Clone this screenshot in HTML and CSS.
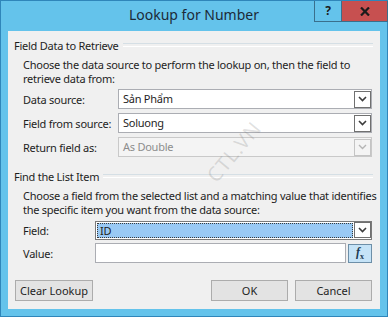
FILE: index.html
```html
<!DOCTYPE html>
<html lang="en">
<head>
    <meta charset="UTF-8">
    <title>Lookup for Number</title>
    <link rel="stylesheet" href="styles.css">
</head>
<body>
    <div class="window">
        <div class="titlebar">
            <div></div>
            <div class="title">Lookup for Number</div>
            <div class="controls">
                <span class="help">?</span>
                <span class="close">
                    <svg width="10" height="9" viewBox="0 0 10 9"><path d="M1 0.5 L9 8.5 M9 0.5 L1 8.5" stroke="#1b1b1b" stroke-width="2.2"/></svg>
                </span>
            </div>
        </div>
        <div class="client">
            <div class="group-head"><span>Field Data to Retrieve</span></div>
            <div class="group-body">
                <p class="desc">Choose the data source to perform the lookup on, then the field to<br>retrieve data from:</p>
                <div class="row wide">
                    <label>Data source:</label>
                    <div class="combo"><span>Sản Phẩm</span><i class="arrow"><svg width="9" height="6" viewBox="0 0 9 6"><path d="M1 1 L4.5 4.5 L8 1" fill="none" stroke="#3c3c3c" stroke-width="1.6"/></svg></i></div>
                </div>
                <div class="row wide">
                    <label>Field from source:</label>
                    <div class="combo"><span>Soluong</span><i class="arrow"><svg width="9" height="6" viewBox="0 0 9 6"><path d="M1 1 L4.5 4.5 L8 1" fill="none" stroke="#3c3c3c" stroke-width="1.6"/></svg></i></div>
                </div>
                <div class="row wide">
                    <label>Return field as:</label>
                    <div class="combo disabled"><span>As Double</span><i class="arrow"><svg width="9" height="6" viewBox="0 0 9 6"><path d="M1 1 L4.5 4.5 L8 1" fill="none" stroke="#b5b5b5" stroke-width="1.4"/></svg></i></div>
                </div>
            </div>

            <div class="group-head second"><span>Find the List Item</span></div>
            <div class="group-body">
                <p class="desc">Choose a field from the selected list and a matching value that identifies<br>the specific item you want from the data source:</p>
                <div class="row narrow">
                    <label>Field:</label>
                    <div class="combo focused"><span class="sel">ID</span><i class="arrow"><svg width="9" height="6" viewBox="0 0 9 6"><path d="M1 1 L4.5 4.5 L8 1" fill="none" stroke="#3c3c3c" stroke-width="1.6"/></svg></i></div>
                </div>
                <div class="row narrow">
                    <label>Value:</label>
                    <div class="value-wrap">
                        <div class="textbox"></div>
                        <button class="fx"><i>f</i><sub>x</sub></button>
                    </div>
                </div>
            </div>

            <div class="buttons">
                <button class="btn clear">Clear Lookup</button>
                <div class="spacer"></div>
                <button class="btn">OK</button>
                <button class="btn">Cancel</button>
            </div>

            <div class="watermark">CTL.VN</div>
        </div>
    </div>
</body>
</html>
```

FILE: styles.css
```css
* {
    margin: 0;
    padding: 0;
    box-sizing: border-box;
}
body {
    width: 388px;
    height: 317px;
    overflow: hidden;
    background: #fff;
    font-family: "Noto Sans", "Open Sans", sans-serif;
    font-size: 11px;
    letter-spacing: -0.25px;
    color: #1e1e1e;
}
.window {
    width: 388px;
    height: 317px;
    background: #64c3eb;
    border: 1px solid #2f86ba;
    padding: 0 7px 7px 7px;
    display: flex;
    flex-direction: column;
}
.titlebar {
    height: 30px;
    display: grid;
    grid-template-columns: 1fr auto 1fr;
}
.title {
    font-size: 14px;
    letter-spacing: 0;
    color: #1c2a38;
    line-height: 28px;
}
.controls {
    justify-self: end;
    align-self: start;
    display: flex;
    margin-right: -8px;
}
.help {
    width: 27px;
    height: 21px;
    border: 1px solid #3a6f8c;
    border-top: none;
    border-right: none;
    text-align: center;
    font-weight: bold;
    font-size: 12px;
    line-height: 20px;
    color: #1b1b1b;
}
.close {
    width: 47px;
    height: 21px;
    background: #c75050;
    border: 1px solid #3a6f8c;
    border-top: none;
    display: flex;
    align-items: center;
    justify-content: center;
}
.client {
    flex: 1;
    background: #f0f0f0;
    padding: 6px 7px 0 6px;
    position: relative;
    overflow: hidden;
}
.group-head {
    display: flex;
    align-items: center;
    height: 16px;
}
.group-head::after {
    content: "";
    flex: 1;
    height: 2px;
    border-top: 1px solid #d5dfe5;
    border-bottom: 1px solid #fff;
    margin-left: 4px;
}
.group-head.second {
    margin-top: 11px;
}
.group-body {
    padding-left: 9px;
}
.desc {
    margin-top: 5px;
    line-height: 14px;
    white-space: nowrap;
}
.row {
    display: flex;
    align-items: center;
    height: 20px;
    margin-top: 4px;
}
.desc + .row {
    margin-top: 3px;
}
.row label {
    flex: none;
}
.wide label {
    width: 95px;
}
.narrow label {
    width: 72px;
}
.narrow + .narrow {
    margin-top: 3px;
}
.combo {
    flex: 1;
    height: 20px;
    margin-right: 1px;
    background: #fff;
    border: 1px solid #abadb3;
    display: flex;
    align-items: center;
    padding: 1px;
}
.combo span {
    flex: 1;
    padding-left: 3px;
    line-height: 16px;
}
.arrow {
    width: 17px;
    height: 17px;
    border: 1px solid #707070;
    display: flex;
    align-items: center;
    justify-content: center;
    margin-right: -1px;
}
.combo.disabled {
    background: #f4f4f4;
    border-color: #c9c9c9;
    color: #8d8d8d;
}
.combo.disabled .arrow {
    border-color: #c4c4c4;
}
.combo.focused {
    height: 19px;
    border-color: #7a7a7a;
}
.combo .sel {
    background: #99c9f4;
    outline: 1px dotted #3a3a3a;
    outline-offset: -1px;
    height: 15px;
    line-height: 15px;
    margin-right: 1px;
}
.combo.focused .arrow {
    height: 16px;
}
.value-wrap {
    flex: 1;
    display: flex;
    align-items: center;
    gap: 2px;
    margin-right: 1px;
}
.textbox {
    flex: 1;
    height: 20px;
    background: #fff;
    border: 1px solid #abadb3;
}
.fx {
    width: 24px;
    height: 19px;
    border: 1px solid #6d8fa8;
    background: #c5e3f7;
    font-family: "Liberation Serif", serif;
    font-size: 12px;
    font-weight: bold;
    color: #1b3a52;
}
.fx sub {
    font-size: 8px;
}
.buttons {
    display: flex;
    gap: 7px;
    margin-top: 17px;
    padding-left: 1px;
    padding-right: 1px;
}
.spacer {
    flex: 1;
}
.btn {
    width: 77px;
    height: 21px;
    border: 1px solid #acacac;
    background: #e3e3e3;
    font-family: "Noto Sans", "Open Sans", sans-serif;
    font-size: 11px;
    color: #1e1e1e;
}
.btn.clear {
    width: 78px;
}
.watermark {
    position: absolute;
    left: 190px;
    top: 107px;
    font-size: 20px;
    letter-spacing: 1px;
    color: rgba(120, 120, 120, 0.22);
    transform: rotate(-50deg);
}
```
